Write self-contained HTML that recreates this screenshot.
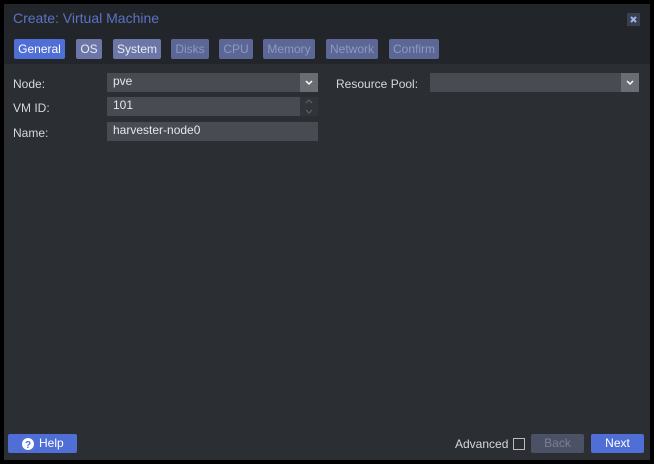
<!DOCTYPE html><html><head><style>
body{margin:0;width:654px;height:464px;background:#000;font-family:"Liberation Sans",sans-serif;font-size:12px;overflow:hidden}
.win{position:absolute;left:4px;top:4px;width:646px;height:456px;background:#2b2e33}
.hd{position:absolute;left:0;top:0;width:646px;height:60px;background:#222529}
.t{position:absolute;left:9px;top:6px;color:#5b73c4;font-size:14px}
.x{position:absolute;left:623px;top:9px;width:13px;height:13px;background:#3a4050}
.tab{position:absolute;top:35px;height:20px;line-height:20px;text-align:center;border-radius:2px;color:#e8eaf2;background:#6c77a8;font-size:12px}
.dis{color:#8f98c0;background:#5d6796}
.a{position:absolute;color:#d6d8dc}
.f{position:absolute;height:19px;background:#484b52;color:#e4e6ea;line-height:17px;padding-left:6px;box-sizing:border-box}
.dd{position:absolute;right:0;top:0;width:18px;height:19px;background:#6a6d74}
.btn{position:absolute;top:430px;height:19px;line-height:19px;text-align:center;border-radius:2px;color:#fff;background:#4f6fd6}
</style></head><body><div class="win">
<div class="hd"><div class="t">Create: Virtual Machine</div><div class="x"><svg width="13" height="13"><path d="M4 4L9 9M9 4L4 9" stroke="#9fb2ee" stroke-width="2"/></svg></div>
<div class="tab" style="left:10px;width:51px;background:#4f6fd6;color:#fff">General</div>
<div class="tab" style="left:72px;width:26px">OS</div>
<div class="tab" style="left:109px;width:48px">System</div>
<div class="tab dis" style="left:167px;width:38px">Disks</div>
<div class="tab dis" style="left:215px;width:34px">CPU</div>
<div class="tab dis" style="left:259px;width:52px">Memory</div>
<div class="tab dis" style="left:322px;width:52px">Network</div>
<div class="tab dis" style="left:385px;width:50px">Confirm</div>
</div>
<div class="a" style="left:9px;top:73px">Node:</div>
<div class="a" style="left:9px;top:97px">VM ID:</div>
<div class="a" style="left:9px;top:122px">Name:</div>
<div class="a" style="left:332px;top:73px">Resource Pool:</div>
<div class="f" style="left:103px;top:69px;width:211px">pve<div class="dd"><svg width="18" height="19"><path d="M6 8L9 11L12 8" stroke="#fff" stroke-width="1.5" fill="none"/></svg></div></div>
<div class="f" style="left:103px;top:93px;width:211px">101<div class="dd" style="background:#313439"><svg width="18" height="19"><path d="M6 6L9 3L12 6M6 13L9 16L12 13" stroke="#666" stroke-width="1" fill="none"/></svg></div></div>
<div class="f" style="left:103px;top:118px;width:211px">harvester-node0</div>
<div class="f" style="left:426px;top:69px;width:209px"><div class="dd"><svg width="18" height="19"><path d="M6 8L9 11L12 8" stroke="#fff" stroke-width="1.5" fill="none"/></svg></div></div>
<div class="btn" style="left:4px;width:69px"><svg width="12" height="12" style="position:absolute;left:14px;top:4px"><circle cx="6" cy="6" r="6" fill="#fff"/><text x="6" y="10" font-size="10" font-weight="bold" text-anchor="middle" fill="#4f6fd6" font-family="Liberation Sans">?</text></svg><span style="position:absolute;left:31px">Help</span></div>
<div class="a" style="left:451px;top:433px;font-size:12px">Advanced</div>
<div style="position:absolute;left:509px;top:434px;width:10px;height:10px;border:1px solid #bbb"></div>
<div class="btn" style="left:527px;width:53px;background:#4c5266;color:#7b8090">Back</div>
<div class="btn" style="left:587px;width:53px">Next</div>
</div></body></html>
